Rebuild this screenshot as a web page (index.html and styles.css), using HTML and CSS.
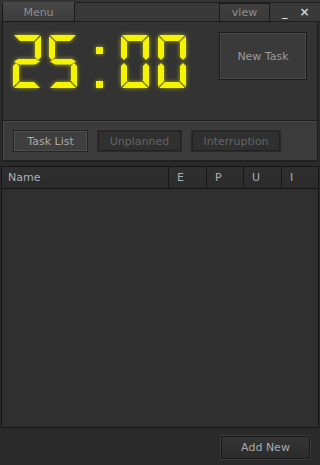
FILE: index.html
```html
<!DOCTYPE html>
<html lang="en">
<head>
    <meta charset="UTF-8">
    <meta name="viewport" content="width=device-width, initial-scale=1.0">
    <title>Pomodoro</title>
    <link rel="stylesheet" href="styles.css">
</head>
<body>

<div class="titlebar">
    <button class="tb-btn menu">Menu</button>
    <div class="tb-fill">
        <button class="tb-btn view">view</button>
        <span class="win-ctl">_</span>
        <span class="win-ctl close">&#215;</span>
    </div>
</div>

<div class="clock-panel">
    <div class="lcd" role="img" aria-label="25:00">
        <div class="digit d2">
            <i class="seg a"></i><i class="seg b"></i><i class="seg g"></i><i class="seg e"></i><i class="seg d"></i>
        </div>
        <div class="digit d5">
            <i class="seg a"></i><i class="seg f"></i><i class="seg g"></i><i class="seg c"></i><i class="seg d"></i>
        </div>
        <div class="colon"><i></i><i></i></div>
        <div class="digit d0">
            <i class="seg a"></i><i class="seg b"></i><i class="seg c"></i><i class="seg d"></i><i class="seg e"></i><i class="seg f"></i>
        </div>
        <div class="digit d0">
            <i class="seg a"></i><i class="seg b"></i><i class="seg c"></i><i class="seg d"></i><i class="seg e"></i><i class="seg f"></i>
        </div>
    </div>
    <button class="btn new-task">New Task</button>
</div>

<div class="tabs">
    <button class="btn tab tab-list">Task List</button>
    <button class="btn tab tab-off unplanned" disabled>Unplanned</button>
    <button class="btn tab tab-off interruption" disabled>Interruption</button>
</div>

<div class="table">
    <div class="thead">
        <div class="th th-name">Name</div>
        <div class="th col-e">E</div>
        <div class="th col-p">P</div>
        <div class="th col-u">U</div>
        <div class="th col-i">I</div>
    </div>
    <div class="tbody"></div>
</div>

<div class="footer">
    <button class="btn add-new">Add New</button>
</div>

</body>
</html>
```

FILE: styles.css
```css
body {
    margin: 0;
    width: 320px;
    height: 465px;
    background-color: #2a2a2a;
    font-family: 'DejaVu Sans', Verdana, sans-serif;
    font-size: 11px;
    color: #a0a0a0;
    overflow: hidden;
}

button {
    font-family: inherit;
    font-size: 11px;
    cursor: pointer;
}

/* barre du haut */
.titlebar {
    display: flex;
    height: 22px;
    background-color: #333;
}

.tb-btn {
    height: 20px;
    margin-top: 2px;
    padding: 0;
    border: 1px solid #1a1a1a;
    border-top-color: #4a4a4a;
    background: linear-gradient(#474747, #3b3b3b);
    color: #8e8e8e;
}

.menu {
    width: 73px;
    margin-left: 2px;
}

.tb-fill {
    flex: 1;
    display: flex;
    align-items: center;
    margin-top: 2px;
    border-top: 1px solid #1e1e1e;
    border-bottom: 1px solid #1e1e1e;
    background-color: #393939;
    padding-left: 144px;
}

.view {
    width: 51px;
    height: 19px;
    margin-top: 0;
    border-top-color: #1a1a1a;
    background: linear-gradient(#404040, #393939);
}

.win-ctl {
    color: #ddd;
    font-size: 11px;
    font-weight: bold;
    margin-left: 12px;
    line-height: 1;
}

.win-ctl.close {
    font-size: 12px;
    color: #c8d4e0;
}

/* horloge */
.clock-panel {
    display: flex;
    justify-content: space-between;
    align-items: flex-start;
    height: 98px;
    margin: 0 2px;
    border-left: 1px solid #1c1c1c;
    border-right: 1px solid #1c1c1c;
    background-color: #333;
}

.lcd {
    display: flex;
    margin: 13px 0 0 10px;
    filter: drop-shadow(0 0 2px rgba(255, 255, 0, 0.6));
}

.digit {
    position: relative;
    width: 28px;
    height: 53px;
    margin-right: 8px;
}

.seg {
    position: absolute;
    background-color: #f4f400;
}

.seg.a, .seg.d, .seg.g {
    left: 1px;
    width: 26px;
    height: 6px;
}

.seg.a {
    top: 0;
    clip-path: polygon(0 0, 100% 0, calc(100% - 6px) 100%, 6px 100%);
}

.seg.d {
    bottom: 0;
    clip-path: polygon(6px 0, calc(100% - 6px) 0, 100% 100%, 0 100%);
}

.seg.g {
    top: 23.5px;
    clip-path: polygon(0 50%, 5px 0, calc(100% - 5px) 0, 100% 50%, calc(100% - 5px) 100%, 5px 100%);
}

.seg.b, .seg.c, .seg.e, .seg.f {
    width: 6px;
    height: 24px;
}

.seg.b, .seg.f { top: 1px; }
.seg.c, .seg.e { bottom: 1px; }
.seg.b, .seg.c { right: 0; }
.seg.e, .seg.f { left: 0; }

.seg.b {
    clip-path: polygon(0 6px, 100% 0, 100% calc(100% - 3px), 50% 100%, 0 calc(100% - 3px));
}

.seg.f {
    clip-path: polygon(0 0, 100% 6px, 100% calc(100% - 3px), 50% 100%, 0 calc(100% - 3px));
}

.seg.c {
    clip-path: polygon(50% 0, 100% 3px, 100% 100%, 0 calc(100% - 6px), 0 3px);
}

.seg.e {
    clip-path: polygon(50% 0, 100% 3px, 100% calc(100% - 6px), 0 100%, 0 3px);
}

.colon {
    display: flex;
    flex-direction: column;
    justify-content: space-between;
    width: 8px;
    height: 41px;
    margin: 12px 17px 0 11px;
}

.colon i {
    display: block;
    width: 7px;
    height: 7px;
    background-color: #f4f400;
}

.d0 {
    margin-right: 9px;
}

.btn {
    border: 1px solid #1c1c1c;
    box-shadow: inset 0 0 0 1px #474747;
    background-color: #3a3a3a;
    color: #9c9c9c;
    padding: 0;
}

.new-task {
    width: 88px;
    height: 48px;
    margin: 10px 10px 0 0;
}

/* onglets */
.tabs {
    display: flex;
    gap: 9px;
    height: 42px;
    margin: 0 2px;
    padding-top: 9px;
    padding-left: 10px;
    box-sizing: border-box;
    border: 1px solid #1c1c1c;
    border-bottom: 2px solid #222;
    background-color: #3b3b3b;
    box-shadow: inset 1px 1px 0 #4a4a4a;
}

.tab {
    height: 22px;
    border-color: #262626;
    box-shadow: inset 0 0 0 1px #4e4e4e;
    background-color: #3f3f3f;
    color: #a8a8a8;
}

.tab-list { width: 75px; }
.unplanned { width: 85px; }
.interruption { width: 90px; }

.tab-off {
    border-color: #2a2a2a;
    box-shadow: inset 0 0 0 1px #222;
    background-color: #303030;
    color: #646464;
    cursor: default;
}

/* tableau */
.table {
    margin: 4px 1px 0;
    height: 260px;
    border: 1px solid #161616;
    background-color: #2f2f2f;
    display: flex;
    flex-direction: column;
}

.thead {
    display: flex;
    height: 21px;
    border-bottom: 1px solid #141414;
    background: linear-gradient(#2f2f2f, #2b2b2b);
}

.th {
    box-sizing: border-box;
    border-left: 1px solid #161616;
    padding-left: 8px;
    line-height: 21px;
    color: #a9b1bb;
}

.th-name {
    width: 166px;
    border-left: none;
    padding-left: 6px;
}

.col-e { width: 38px; }
.col-p { width: 37px; }
.col-u { width: 38px; }
.col-i { flex: 1; }

.tbody {
    flex: 1;
}

/* bas de page */
.footer {
    display: flex;
    justify-content: flex-end;
    padding: 8px 10px 0 0;
}

.add-new {
    width: 89px;
    height: 23px;
    border-color: #1a1a1a;
    box-shadow: 0 0 0 1px #3a3a3a;
    background: linear-gradient(#353535, #2b2b2b);
    color: #a4aab2;
}
```
